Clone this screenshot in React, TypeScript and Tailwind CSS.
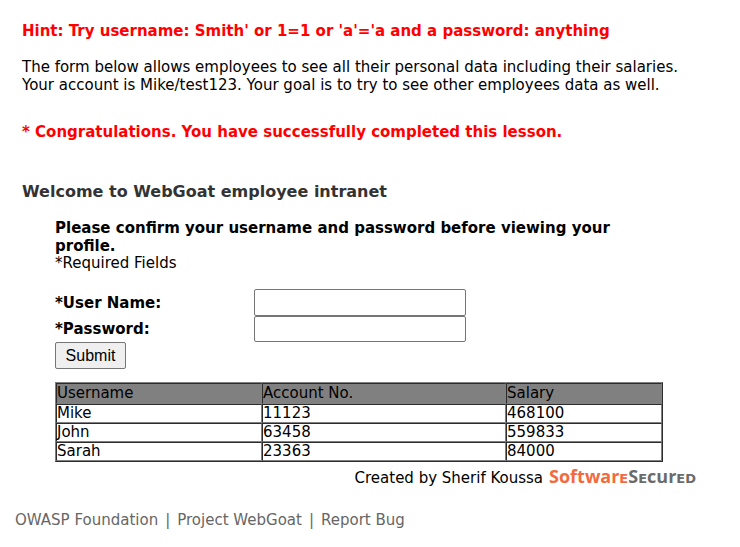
const employees = [
  { name: 'Mike', account: '11123', salary: '468100' },
  { name: 'John', account: '63458', salary: '559833' },
  { name: 'Sarah', account: '23363', salary: '84000' },
];

const cell = 'border border-t-[#2c2c2c] border-l-[#2c2c2c] border-r-[#808080] border-b-[#808080] p-0 text-left font-normal';
const field = 'w-full rounded-[2px] border border-[#767676] bg-white px-1';

function EmployeeTable() {
  return (
    <table className="mt-[13px] w-full table-fixed border-separate border-spacing-0 border border-t-[#808080] border-l-[#808080] border-r-[#2c2c2c] border-b-[#2c2c2c] leading-[17px]">
      <colgroup>
        <col className="w-[34%]" />
        <col />
        <col className="w-[156px]" />
      </colgroup>
      <thead>
        <tr className="h-[21px] bg-[#808080]">
          <th className={cell}>Username</th>
          <th className={cell}>Account No.</th>
          <th className={cell}>Salary</th>
        </tr>
      </thead>
      <tbody>
        {employees.map((e) => (
          <tr key={e.name}>
            <td className={cell}>{e.name}</td>
            <td className={cell}>{e.account}</td>
            <td className={cell}>{e.salary}</td>
          </tr>
        ))}
      </tbody>
    </table>
  );
}

function Logo() {
  return (
    <a href="#software-secured" className="flex items-baseline font-['Open_Sans',sans-serif] text-[18px] leading-6 font-bold">
      <span className="text-[#f26a3d]">Softwar</span>
      <span className="font-['DejaVu_Sans',sans-serif] text-[13px] text-[#f26a3d]">E</span>
      <span className="text-[#6b6b6b]">S</span>
      <span className="font-['DejaVu_Sans',sans-serif] text-[13px] text-[#6b6b6b]">E</span>
      <span className="text-[#6b6b6b]">cur</span>
      <span className="font-['DejaVu_Sans',sans-serif] text-[13px] text-[#6b6b6b]">ED</span>
    </a>
  );
}

export default function App() {
  return (
    <div className="bg-white font-['DejaVu_Sans',Verdana,sans-serif] text-[15px] leading-[18px] text-black">
      <main className="px-[22px] pt-[22px]">
        <p className="font-bold text-[#ff0000]">
          Hint: Try username: Smith' or 1=1 or 'a'='a and a password: anything
        </p>
        <p className="mt-[18px]">
          The form below allows employees to see all their personal data including their salaries.
          <br />
          Your account is Mike/test123. Your goal is to try to see other employees data as well.
        </p>
        <p className="mt-[29px] font-bold text-[#ff0000]">
          * Congratulations. You have successfully completed this lesson.
        </p>
        <h1 className="mt-[42px] text-base leading-[18px] font-bold text-[#333333]">
          Welcome to WebGoat employee intranet
        </h1>
        <form className="mt-[18px] mr-[55px] ml-[33px]" onSubmit={(e) => e.preventDefault()}>
          <p className="font-bold">
            Please confirm your username and password before viewing your
            <br />
            profile.
          </p>
          <p className="leading-4">*Required Fields</p>
          <div className="mt-[18px] grid grid-cols-[199px_212px] items-center">
            <label htmlFor="user" className="font-bold">*User Name:</label>
            <input id="user" type="text" className={`h-[27px] ${field}`} />
            <label htmlFor="pass" className="font-bold">*Password:</label>
            <input id="pass" type="password" className={`h-[26px] ${field}`} />
          </div>
          <button
            type="submit"
            className="block h-[27px] w-[71px] rounded-[2px] border border-[#767676] bg-[#efefef] font-['Liberation_Sans',Arial,sans-serif] text-base leading-6"
          >
            Submit
          </button>
          <EmployeeTable />
        </form>
        <div className="mt-[2px] mr-[22px] flex items-center justify-end gap-[6px]">
          <span>Created by Sherif Koussa</span>
          <Logo />
        </div>
      </main>
      <footer className="flex gap-[7px] px-[15px] pt-5 text-[#666666]">
        <a href="#owasp">OWASP Foundation</a>
        <span>|</span>
        <a href="#webgoat">Project WebGoat</a>
        <span>|</span>
        <a href="#bug">Report Bug</a>
      </footer>
    </div>
  );
}
